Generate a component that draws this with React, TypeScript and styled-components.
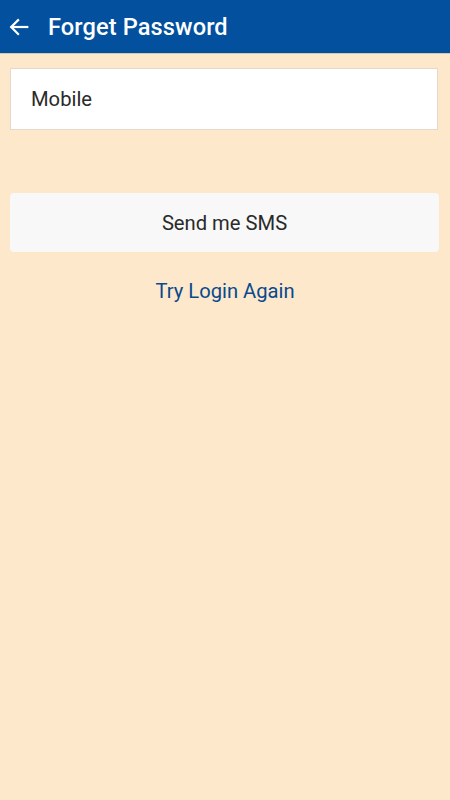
import React from "react";
import styled, { createGlobalStyle } from "styled-components";

const GlobalStyle = createGlobalStyle`
  html, body {
    margin: 0;
    padding: 0;
    background: #fee8cc;
    font-family: Roboto, "Noto Sans", sans-serif;
  }
`;

const Page = styled.div`
  min-height: 800px;
  background: #fee8cc;
  display: flex;
  flex-direction: column;
`;

const Toolbar = styled.header`
  height: 53px;
  background: #02509e;
  display: flex;
  align-items: center;
  gap: 18px;
  padding: 0 8px;
  border-bottom: 1px solid #d9c6ae;
  box-sizing: content-box;
`;

const BackBtn = styled.button`
  border: 0;
  background: none;
  padding: 0;
  width: 22px;
  height: 22px;
  display: flex;
  color: #fff;
`;

const Title = styled.h1`
  margin: 0;
  color: #fff;
  font-size: 23.6px;
  font-weight: 500;
  letter-spacing: 0.1px;
`;

const Body = styled.main`
  display: flex;
  flex-direction: column;
  padding: 14px 12px 0 10px;
`;

const Field = styled.input`
  height: 62px;
  box-sizing: border-box;
  border: 1px solid #e4d9cb;
  background: #fff;
  padding: 0 20px;
  font-family: inherit;
  font-size: 20.2px;
  color: #2a2a2a;
  outline: none;
  &::placeholder {
    color: #2a2a2a;
  }
`;

const SmsButton = styled.button`
  margin-top: 63px;
  height: 59px;
  border: 0;
  border-radius: 4px;
  background: #f8f8f8;
  font-family: inherit;
  font-size: 20.2px;
  color: #2a2a2a;
  margin-right: -1px;
`;

const LinkText = styled.a`
  margin-top: 27px;
  align-self: center;
  color: #084a8c;
  font-size: 20.2px;
  text-decoration: none;
  margin-left: 2px;
`;

export default function App() {
  return (
    <Page>
      <GlobalStyle />
      <Toolbar>
        <BackBtn aria-label="back">
          <svg width="22" height="22" viewBox="0 0 24 24" fill="none" stroke="currentColor" strokeWidth="2.4" strokeLinecap="square">
            <path d="M21 12H4" />
            <path d="M11 4.5 3.5 12l7.5 7.5" />
          </svg>
        </BackBtn>
        <Title>Forget Password</Title>
      </Toolbar>
      <Body>
        <Field placeholder="Mobile" />
        <SmsButton>Send me SMS</SmsButton>
        <LinkText href="#">Try Login Again</LinkText>
      </Body>
    </Page>
  );
}
